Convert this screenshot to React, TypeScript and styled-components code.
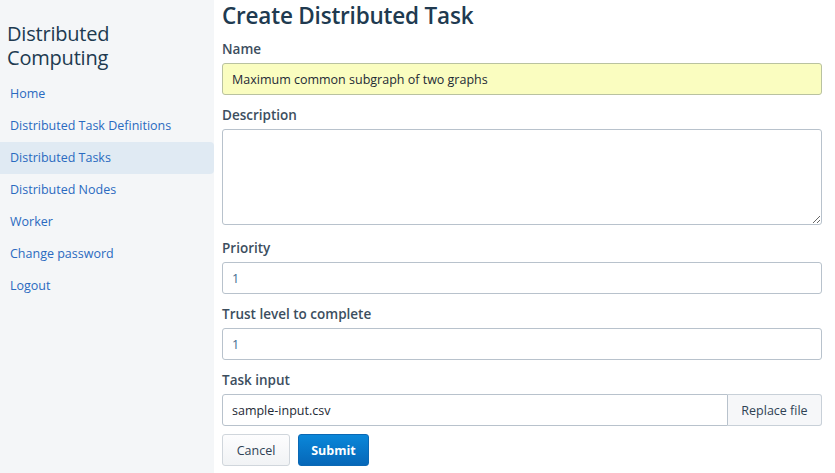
import React from "react";
import styled, { createGlobalStyle } from "styled-components";

const Global = createGlobalStyle`
  html, body { margin: 0; padding: 0; background: #fff; }
  body { font-family: "Open Sans", "Noto Sans", sans-serif; }
  * { box-sizing: border-box; }
`;

const Page = styled.div`
  display: flex;
  width: 835px;
  height: 473px;
  overflow: hidden;
`;

const Sidebar = styled.nav`
  width: 214px;
  flex: none;
  background: #f4f6f8;
  padding-top: 20px;
`;

const Brand = styled.h1`
  margin: 0 0 8px 7px;
  font-size: 20px;
  line-height: 24px;
  font-weight: 500;
  color: #203a50;
  letter-spacing: -0.2px;
  padding-top: 2px;
`;

const NavItem = styled.a<{ $active?: boolean }>`
  display: block;
  height: 32px;
  line-height: 32px;
  padding-left: 10px;
  font-size: 12.5px;
  color: #2a6ac0;
  text-decoration: none;
  background: ${(p) => (p.$active ? "#e0eaf3" : "transparent")};
  border-radius: 0 4px 4px 0;
`;

const Main = styled.main`
  flex: 1;
  padding: 2px 13px 0 8px;
`;

const Title = styled.h2`
  margin: 0 0 9px;
  font-size: 22.5px;
  line-height: 28px;
  font-weight: 600;
  color: #203a50;
  letter-spacing: -0.2px;
`;

const Field = styled.div`
  display: flex;
  flex-direction: column;
  margin-bottom: 10px;
`;

const Label = styled.label`
  font-size: 13.5px;
  line-height: 20px;
  font-weight: 600;
  color: #3c4e5e;
  margin-bottom: 4px;
`;

const Input = styled.input<{ $fill?: boolean }>`
  height: 32px;
  width: 100%;
  border: 1px solid ${(p) => (p.$fill ? "#b9c2a0" : "#b8c2cc")};
  border-radius: 3px;
  background: ${(p) => (p.$fill ? "#fafdc0" : "#fff")};
  padding: 0 9px;
  font-family: inherit;
  font-size: 12.5px;
  color: #1e2a36;
  outline: none;
`;

const NumInput = styled(Input)`
  color: #3f6a8e;
`;

const TextArea = styled.textarea`
  height: 96px;
  width: 100%;
  border: 1px solid #b8c2cc;
  border-radius: 3px;
  padding: 6px 9px;
  font-family: inherit;
  font-size: 12.5px;
  resize: vertical;
  display: block;
  outline: none;
  margin-bottom: 3px;
`;

const Group = styled.div`
  display: flex;
  height: 32px;
`;

const GroupInput = styled(Input)`
  flex: 1;
  border-radius: 3px 0 0 3px;
`;

const Addon = styled.button`
  width: 94px;
  flex: none;
  height: 32px;
  border: 1px solid #c8d0d8;
  border-left: none;
  border-radius: 0 3px 3px 0;
  background: #f6f7f9;
  font-family: inherit;
  font-size: 12.5px;
  color: #2f4254;
`;

const Actions = styled.div`
  display: flex;
  gap: 8px;
  margin-top: -2px;
`;

const Button = styled.button<{ $primary?: boolean }>`
  height: 32px;
  width: ${(p) => (p.$primary ? "71px" : "68px")};
  padding: 0;
  border-radius: 3px;
  font-family: inherit;
  font-size: 12.5px;
  font-weight: ${(p) => (p.$primary ? 700 : 400)};
  color: ${(p) => (p.$primary ? "#fff" : "#2f4254")};
  border: 1px solid ${(p) => (p.$primary ? "#0a68b4" : "#d0d6dc")};
  background: ${(p) =>
    p.$primary ? "linear-gradient(#0a87d9, #0667b8)" : "linear-gradient(#fdfdfe, #f1f3f5)"};
`;

export default function App() {
  return (
    <Page>
      <Global />
      <Sidebar>
        <Brand>
          Distributed
          <br />
          Computing
        </Brand>
        <NavItem>Home</NavItem>
        <NavItem>Distributed Task Definitions</NavItem>
        <NavItem $active>Distributed Tasks</NavItem>
        <NavItem>Distributed Nodes</NavItem>
        <NavItem>Worker</NavItem>
        <NavItem>Change password</NavItem>
        <NavItem>Logout</NavItem>
      </Sidebar>
      <Main>
        <Title>Create Distributed Task</Title>
        <Field>
          <Label>Name</Label>
          <Input $fill defaultValue="Maximum common subgraph of two graphs" />
        </Field>
        <Field>
          <Label>Description</Label>
          <TextArea />
        </Field>
        <Field>
          <Label>Priority</Label>
          <NumInput defaultValue="1" />
        </Field>
        <Field>
          <Label>Trust level to complete</Label>
          <NumInput defaultValue="1" />
        </Field>
        <Field>
          <Label>Task input</Label>
          <Group>
            <GroupInput defaultValue="sample-input.csv" />
            <Addon>Replace file</Addon>
          </Group>
        </Field>
        <Actions>
          <Button>Cancel</Button>
          <Button $primary>Submit</Button>
        </Actions>
      </Main>
    </Page>
  );
}
